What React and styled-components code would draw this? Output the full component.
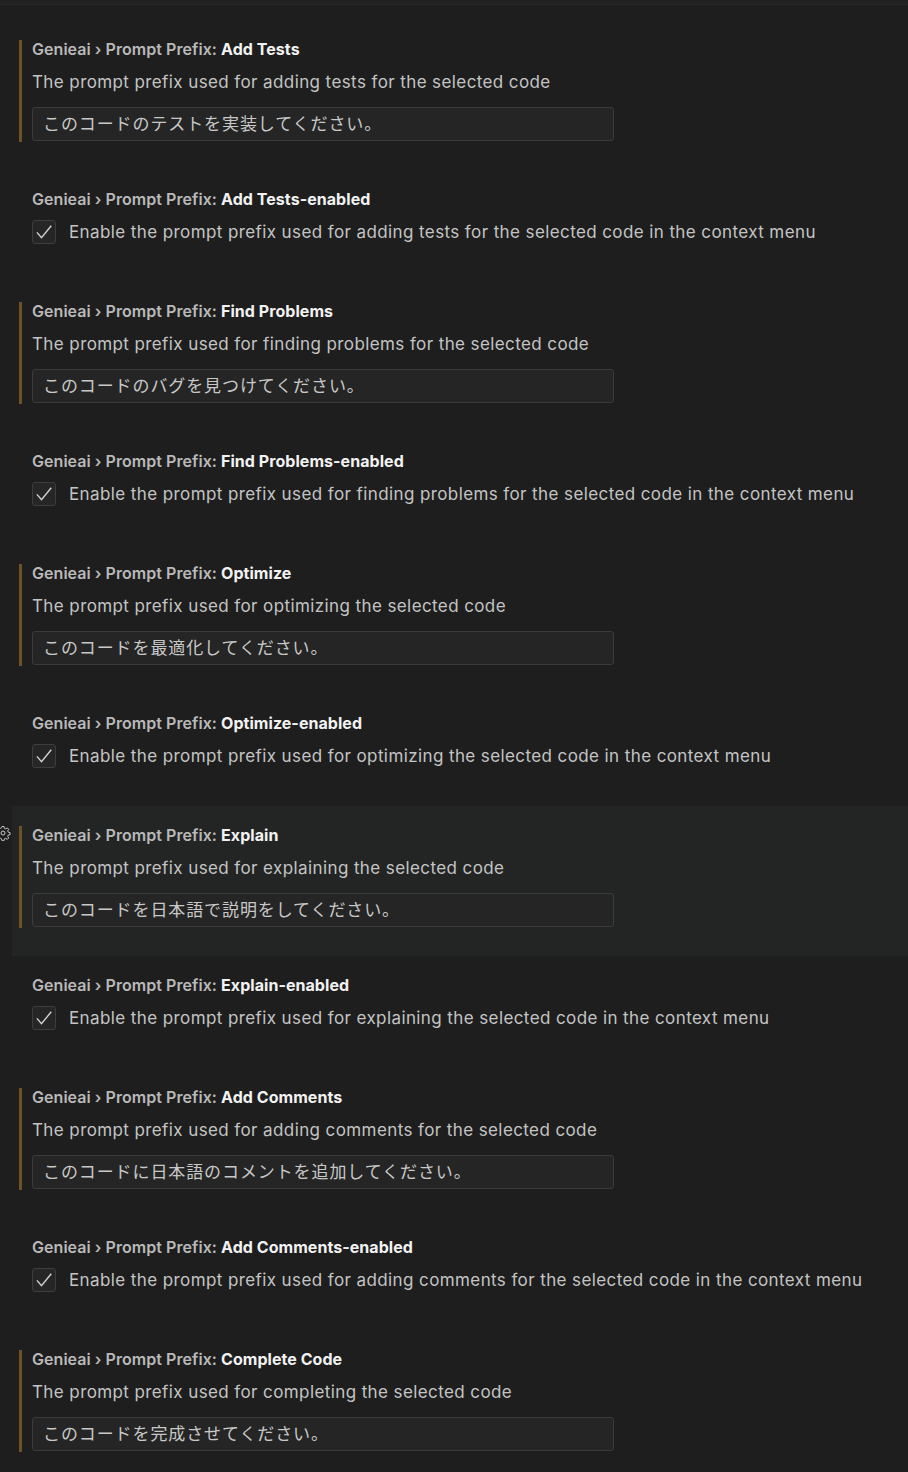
import styled, { createGlobalStyle } from "styled-components";

const GlobalStyle = createGlobalStyle`
  body {
    margin: 0;
    background: #1e1e1e;
    font-family: Inter, "Noto Sans", "Noto Sans CJK JP", sans-serif;
  }
`;

const StyledPage = styled.div`
  width: 908px;
  min-height: 1472px;
  background: #1e1e1e;
  overflow: hidden;
`;

const StyledTopBar = styled.div`
  height: 4px;
  background: #212121;
  border-bottom: 1px solid #262626;
  margin-bottom: 15px;
`;

const StyledItem = styled.div`
  position: relative;
  margin-left: 12px;
  padding: 20px 0 0 7px;
  height: ${(p) => (p.$check ? 112 : 150)}px;
  box-sizing: border-box;
  background: ${(p) => (p.$focused ? "#232524" : "transparent")};
`;

const StyledGear = styled.svg`
  position: absolute;
  left: -17px;
  top: 19px;
`;

const StyledBody = styled.div`
  border-left: ${(p) => (p.$modified ? "3px solid #6c5224" : "3px solid transparent")};
  padding-left: 10px;
  padding-bottom: 1px;
`;

const StyledTitle = styled.div`
  font-size: 16px;
  line-height: 18px;
  font-weight: 600;
  color: #b9b9b9;
  letter-spacing: 0.05px;
`;

const StyledKey = styled.span`
  color: #f2f2f2;
  font-weight: 700;
`;

const StyledDesc = styled.div`
  margin-top: 13px;
  font-size: 17px;
  line-height: 22px;
  color: #c4c4c4;
  letter-spacing: 0.4px;
`;

const StyledInput = styled.div`
  margin-top: 14px;
  width: 582px;
  height: 34px;
  box-sizing: border-box;
  background: #252525;
  border: 1px solid #3b3b3b;
  border-radius: 3px;
  padding: 0 0 3px 10px;
  display: flex;
  align-items: center;
  font-size: 17px;
  color: #c8c8c8;
  letter-spacing: 0.9px;
  font-family: "Noto Sans CJK JP", sans-serif;
`;

const StyledCheckRow = styled.div`
  margin-top: 12px;
  display: flex;
  align-items: center;
  gap: 13px;
`;

const StyledCheckbox = styled.div`
  width: 24px;
  height: 24px;
  box-sizing: border-box;
  background: #262626;
  border: 1px solid #3d3d3d;
  border-radius: 3px;
  display: flex;
  align-items: center;
  justify-content: center;
  flex-shrink: 0;
`;

const settings = [
  {
    key: "Add Tests",
    desc: "The prompt prefix used for adding tests for the selected code",
    value: "このコードのテストを実装してください。",
    check: "Enable the prompt prefix used for adding tests for the selected code in the context menu",
  },
  {
    key: "Find Problems",
    desc: "The prompt prefix used for finding problems for the selected code",
    value: "このコードのバグを見つけてください。",
    check: "Enable the prompt prefix used for finding problems for the selected code in the context menu",
  },
  {
    key: "Optimize",
    desc: "The prompt prefix used for optimizing the selected code",
    value: "このコードを最適化してください。",
    check: "Enable the prompt prefix used for optimizing the selected code in the context menu",
  },
  {
    key: "Explain",
    desc: "The prompt prefix used for explaining the selected code",
    value: "このコードを日本語で説明をしてください。",
    check: "Enable the prompt prefix used for explaining the selected code in the context menu",
    focused: true,
  },
  {
    key: "Add Comments",
    desc: "The prompt prefix used for adding comments for the selected code",
    value: "このコードに日本語のコメントを追加してください。",
    check: "Enable the prompt prefix used for adding comments for the selected code in the context menu",
  },
  {
    key: "Complete Code",
    desc: "The prompt prefix used for completing the selected code",
    value: "このコードを完成させてください。",
  },
];

const Gear = () => (
  <StyledGear width="16" height="16" viewBox="0 0 16 16" fill="none" stroke="#c8c8c8" strokeWidth="1">
    <path d="M7 1.5h2l.4 1.8 1.3.6 1.6-1 1.4 1.4-1 1.6.6 1.3 1.8.4v2l-1.8.4-.6 1.3 1 1.6-1.4 1.4-1.6-1-1.3.6-.4 1.8H7l-.4-1.8-1.3-.6-1.6 1-1.4-1.4 1-1.6-.6-1.3-1.8-.4V7l1.8-.4.6-1.3-1-1.6 1.4-1.4 1.6 1 1.3-.6z" />
    <circle cx="8" cy="8" r="2" />
  </StyledGear>
);

const Title = ({ name }) => (
  <StyledTitle>
    Genieai › Prompt Prefix: <StyledKey>{name}</StyledKey>
  </StyledTitle>
);

const App = () => {
  return (
    <>
      <GlobalStyle />
      <StyledPage>
        <StyledTopBar />
        {settings.map((s) => (
          <div key={s.key}>
            <StyledItem $focused={s.focused}>
              {s.focused && <Gear />}
              <StyledBody $modified>
                <Title name={s.key} />
                <StyledDesc>{s.desc}</StyledDesc>
                <StyledInput>{s.value}</StyledInput>
              </StyledBody>
            </StyledItem>
            {s.check && (
              <StyledItem $check>
                <StyledBody>
                  <Title name={`${s.key}-enabled`} />
                  <StyledCheckRow>
                    <StyledCheckbox>
                      <svg width="20" height="20" viewBox="0 0 16 16" fill="none">
                        <path d="M2.3 8.3l3.7 4.3L13.8 3" stroke="#d4d4d4" strokeWidth="1.1" />
                      </svg>
                    </StyledCheckbox>
                    <StyledDesc as="span" style={{ marginTop: 0 }}>
                      {s.check}
                    </StyledDesc>
                  </StyledCheckRow>
                </StyledBody>
              </StyledItem>
            )}
          </div>
        ))}
      </StyledPage>
    </>
  );
};

export default App;
